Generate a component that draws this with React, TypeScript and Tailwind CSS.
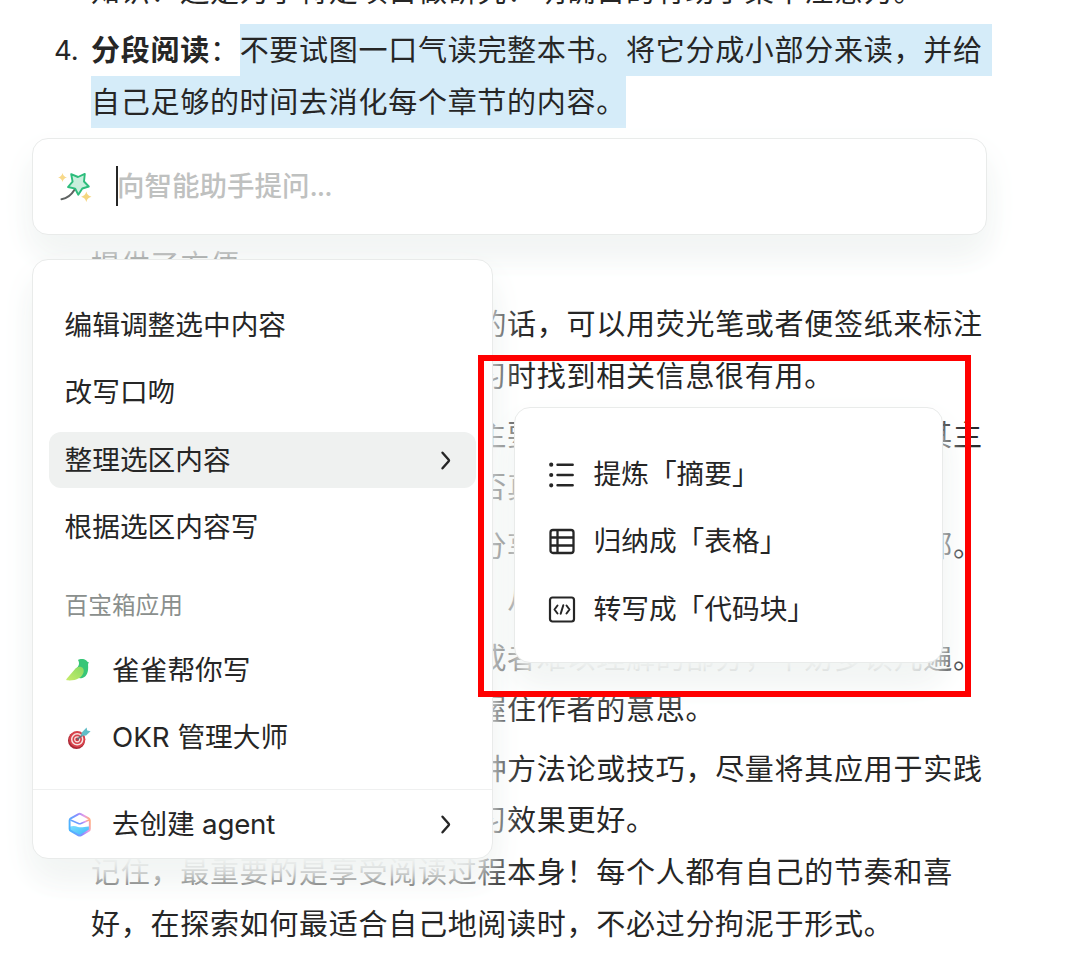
import React from "react";

interface Paragraph {
  marker?: string;
  title?: string;
  lines: string[];
  selected?: boolean;
}

const paragraphs: Paragraph[] = [
  { lines: ["知识？还是为了特定项目做研究？明确目的有助于集中注意力。"] },
  {
    marker: "4.",
    title: "分段阅读",
    selected: true,
    lines: [
      "不要试图一口气读完整本书。将它分成小部分来读，并给",
      "自己足够的时间去消化每个章节的内容。",
    ],
  },
  {
    marker: "5.",
    title: "做好笔记",
    lines: [
      "在阅读的过程中随手记录重要的概念和自己的想法，这",
      "样不仅可以加深对内容的理解，也为之后回顾这本书的时候",
      "提供了方便。",
    ],
  },
  {
    marker: "6.",
    title: "标记重点",
    lines: [
      "如果这是自己的书的话，可以用荧光笔或者便签纸来标注",
      "重要的段落，这对于你将来复习时找到相关信息很有用。",
    ],
  },
  {
    marker: "7.",
    title: "总结归纳",
    lines: [
      "读完每一个章节后主要观点是什么，尝试用自己的话其主",
      "要内容，再检查自己对它们是否真正理解。",
    ],
  },
  {
    marker: "8.",
    title: "讨论交流",
    lines: [
      "与身边的朋友一起分享书中的内容，或加入读书俱乐部。",
      "这样可以获得很多不同的观点，从而加深理解。",
    ],
  },
  {
    marker: "9.",
    title: "反复阅读",
    lines: [
      "对于那些很重要的或者难以理解的部分，不妨多读几遍。",
      "这样能够帮助你更加准确地把握住作者的意思。",
    ],
  },
  {
    title: "实践应用",
    lines: [
      "如果书中介绍了某种方法论或技巧，尽量将其应用于实践",
      "中，这样才能够让你整体的学习效果更好。",
      "记住，最重要的是享受阅读过程本身！每个人都有自己的节奏和喜",
      "好，在探索如何最适合自己地阅读时，不必过分拘泥于形式。",
    ],
  },
];

const panel =
  "border border-[#e9ebea] bg-white rounded-[16px] shadow-[0_16px_36px_#f2f5f4,0_24px_32px_-6px_#f2f5f4]";

const WandIcon = () => (
  <svg width="34" height="34" viewBox="0 0 34 34" fill="none">
    <path d="M3.500 29.200c5.800-.9 10-4.500 13-9.500" stroke="#5f6362" strokeWidth="2" strokeLinecap="round" />
    <path
      d="M13.200 4.200 20 7 26.800 3.900 26 11.500 30.800 16.500 24.300 18.500 20.300 24.800 17.200 18.700 10 17 14.600 11.600Z"
      fill="#c9efdd"
      stroke="#2dbd7c"
      strokeWidth="1.900"
      strokeLinejoin="round"
    />
    <path d="M4.500 3q.9 3.600 4.500 4.500Q5.400 8.400 4.500 12 3.600 8.400 0 7.500 3.600 6.600 4.500 3Z" fill="#f8d98a" />
    <path d="M28.300 21.500q1 4.200 5.200 5.200-4.200 1-5.200 5.200-1-4.200-5.200-5.200 4.200-1 5.200-5.200Z" fill="#f5d67f" />
  </svg>
);

const ListIcon = () => (
  <svg width="28" height="28" viewBox="0 0 28 28" fill="none" stroke="#262626" strokeLinecap="round">
    <path d="M9.500 3.700h15.200M9.500 14h15.200M9.500 24.300h15.200" strokeWidth="2.400" />
    <path d="M3.200 3.700h.01M3.200 14h.01M3.200 24.300h.01" strokeWidth="4.200" />
  </svg>
);

const TableIcon = () => (
  <svg width="28" height="28" viewBox="0 0 28 28" fill="none" stroke="#262626" strokeWidth="2.300">
    <rect x="2.500" y="2" width="23" height="23" rx="2.500" />
    <path d="M9.500 2v23M2.500 9.500h23M2.500 17.500h23" />
  </svg>
);

const CodeIcon = () => (
  <svg
    width="28"
    height="28"
    viewBox="0 0 28 28"
    fill="none"
    stroke="#262626"
    strokeWidth="2.200"
    strokeLinecap="round"
    strokeLinejoin="round"
  >
    <rect x="2" y="1.500" width="24" height="24" rx="2.500" />
    <path d="M9.500 9.500 6.500 13.500l3 4M18.500 9.500l3 4-3 4M15.300 9.300l-2.600 8.400" strokeWidth="2" />
  </svg>
);

const BirdIcon = () => (
  <svg width="26" height="26" viewBox="0 0 26 26">
    <defs>
      <linearGradient id="wing" x1="0" y1="1" x2="1" y2="0">
        <stop offset="0" stopColor="#c9ec6b" />
        <stop offset="1" stopColor="#86da62" />
      </linearGradient>
    </defs>
    <path
      d="M13 2c2-1.200 6-1.300 8 .3.900.8 1.200 1.700 3 2.100-.8.700-1 1.600-.9 2.800.4 6.300-.7 11-5.800 12.800-3 .6-5.500 0-8-3L10 11.500C14 8.500 15 5.500 13 2Z"
      fill="#37c677"
    />
    <path
      d="M10.500 10.600C14.500 6.800 19.800 9 18.600 14.200 17 20 10.500 23.100 1.800 22.300 1.100 22.100 1.100 21.300 1.700 20.700Z"
      fill="url(#wing)"
    />
  </svg>
);

const TargetIcon = () => (
  <svg width="26" height="26" viewBox="0 0 26 26" fill="none">
    <ellipse cx="11.500" cy="15.400" rx="8.500" ry="8.600" fill="#a92835" />
    <circle cx="12.200" cy="14.300" r="8.200" fill="#d8424b" />
    <circle cx="12.200" cy="14.300" r="5.500" stroke="#f7e4e2" strokeWidth="1.500" />
    <circle cx="12.200" cy="14.300" r="2.500" fill="#c93640" stroke="#f7e4e2" strokeWidth="1.200" />
    <path d="m12.200 14.300 8.500-7" stroke="#63717b" strokeWidth="1.500" />
    <path d="m16 10.800.8-3.200 4.800-5.200.6 3 3.400.8-4.500 4.200Z" fill="#62bdc7" />
  </svg>
);

const CubeIcon = () => (
  <svg width="26" height="26" viewBox="0 0 26 26" fill="none">
    <defs>
      <linearGradient id="cube" x1="0" y1=".6" x2="1" y2=".3">
        <stop offset="0" stopColor="#4bb4ff" />
        <stop offset=".5" stopColor="#8b8bff" />
        <stop offset=".8" stopColor="#e49be8" />
        <stop offset="1" stopColor="#ffab82" />
      </linearGradient>
      <linearGradient id="water" x1="0" y1="0" x2="1" y2="1">
        <stop offset="0" stopColor="#7ee0ff" />
        <stop offset="1" stopColor="#38b6fa" />
      </linearGradient>
    </defs>
    <path d="M3.300 15c3-1.500 5.700-1.300 8.700-.1 3.500 1.300 7-.7 11.200-.4v4L13 23.800 3.300 18Z" fill="url(#water)" />
    <path
      d="M12.500 2.100q1.200-.6 2.400 0l7.700 4.300q1.200.7 1.200 2v8.500q0 1.300-1.200 2l-7.700 4.400q-1.200.6-2.400 0l-7.700-4.400q-1.200-.7-1.200-2V8.400q0-1.300 1.200-2Z"
      stroke="url(#cube)"
      strokeWidth="1.900"
    />
    <path d="m4.500 8 8 3.500q1.200.5 2.400 0L23 8" stroke="url(#cube)" strokeWidth="1.400" />
  </svg>
);

const Chevron = () => (
  <svg className="ml-auto" width="22" height="22" viewBox="0 0 22 22" fill="none">
    <path d="m4.500 2.700 6.200 7.100q.6.700 0 1.400L4.500 18.300" stroke="#262626" strokeWidth="2.400" strokeLinecap="round" />
  </svg>
);

const Article: React.FC = () => (
  <article className="-mt-[35px] flex flex-col gap-[7.500px] pl-[91px] text-[29px] leading-[53px] tracking-[0.720px] text-[#262626]">
    {paragraphs.map((p, i) => (
      <div key={i} className="flex">
        {p.marker && (
          <span className="-ml-[37px] w-[37px] shrink-0 text-[27.500px] tracking-normal">
            {p.marker}
          </span>
        )}
        <div>
          {p.lines.map((line, j) => (
            <p key={j} className="flex h-[51.800px] whitespace-nowrap">
              {j === 0 && p.title && (
                <span>
                  <b className="font-bold">{p.title}</b>：
                </span>
              )}
              <span
                className={
                  !p.selected ? "" : j === 0 ? "bg-[#d5ecf9] pr-[9.500px]" : "bg-[#d5ecf9]"
                }
              >
                {line}
              </span>
            </p>
          ))}
        </div>
      </div>
    ))}
  </article>
);

const actions = ["编辑调整选中内容", "改写口吻", "整理选区内容", "根据选区内容写"];

const apps = [
  { name: "雀雀帮你写", icon: <BirdIcon /> },
  { name: "OKR 管理大师", icon: <TargetIcon /> },
];

const conversions = [
  { name: "提炼「摘要」", icon: <ListIcon /> },
  { name: "归纳成「表格」", icon: <TableIcon /> },
  { name: "转写成「代码块」", icon: <CodeIcon /> },
];

const AssistantInput: React.FC = () => (
  <div className={`absolute left-[32px] top-[138px] flex h-[97px] w-[955px] items-center pl-[25px] ${panel}`}>
    <WandIcon />
    <span className="-mt-px ml-[24px] h-[40px] w-[2px] bg-[#262626]" />
    <span className="-ml-px text-[27.500px] font-medium text-[#bfc1c0]">
      向智能助手提问<span className="tracking-[-1px]">...</span>
    </span>
  </div>
);

const ActionMenu: React.FC = () => (
  <div className={`absolute left-[32px] top-[259px] flex h-[600px] w-[461px] flex-col ${panel}`}>
    <div className="mt-[37px] flex flex-col gap-[12px] px-4">
      {actions.map((name) => (
        <div
          key={name}
          className={`flex h-[55.500px] items-center rounded-[12px] pl-[15.500px] pr-4 pt-[2px] ${
            name === "整理选区内容" ? "bg-[#eff1f0]" : ""
          }`}
        >
          {name}
          {name === "整理选区内容" && <Chevron />}
        </div>
      ))}
    </div>
    <div className="mt-[28px] flex h-[45px] items-center px-[31.500px] text-[23.700px] text-[#8a8f8d]">
      百宝箱应用
    </div>
    <div className="mt-[15px] flex flex-col gap-[12px] px-8">
      {apps.map((app) => (
        <div key={app.name} className="flex h-[55.500px] items-center gap-[21px]">
          {app.icon}
          {app.name}
        </div>
      ))}
    </div>
    <div className="mt-auto flex h-[69px] items-center gap-[20px] border-t border-[#eff0f0] pl-[33px] pr-8 pt-[2px]">
      <CubeIcon />
      <span className="tracking-[-0.200px]">去创建 agent</span>
      <Chevron />
    </div>
  </div>
);

const ConversionMenu: React.FC = () => (
  <div
    className={`absolute left-[514px] top-[407px] flex h-[256px] w-[429px] flex-col gap-[12px] pl-[33px] pt-[39px] ${panel}`}
  >
    {conversions.map((item) => (
      <div key={item.name} className="flex h-[55.500px] items-center gap-[17.500px]">
        {item.icon}
        {item.name}
      </div>
    ))}
  </div>
);

export default function App() {
  return (
    <div
      lang="zh-CN"
      className="relative flow-root h-[969px] w-[1080px] overflow-hidden bg-white font-[Inter,'Noto_Sans_CJK_SC',sans-serif] text-[27.700px] text-[#262626]"
    >
      <Article />
      <AssistantInput />
      <ActionMenu />
      <ConversionMenu />
      <div className="absolute left-[478px] top-[355px] h-[342px] w-[493px] border-[6px] border-[#ff0000]" />
    </div>
  );
}
